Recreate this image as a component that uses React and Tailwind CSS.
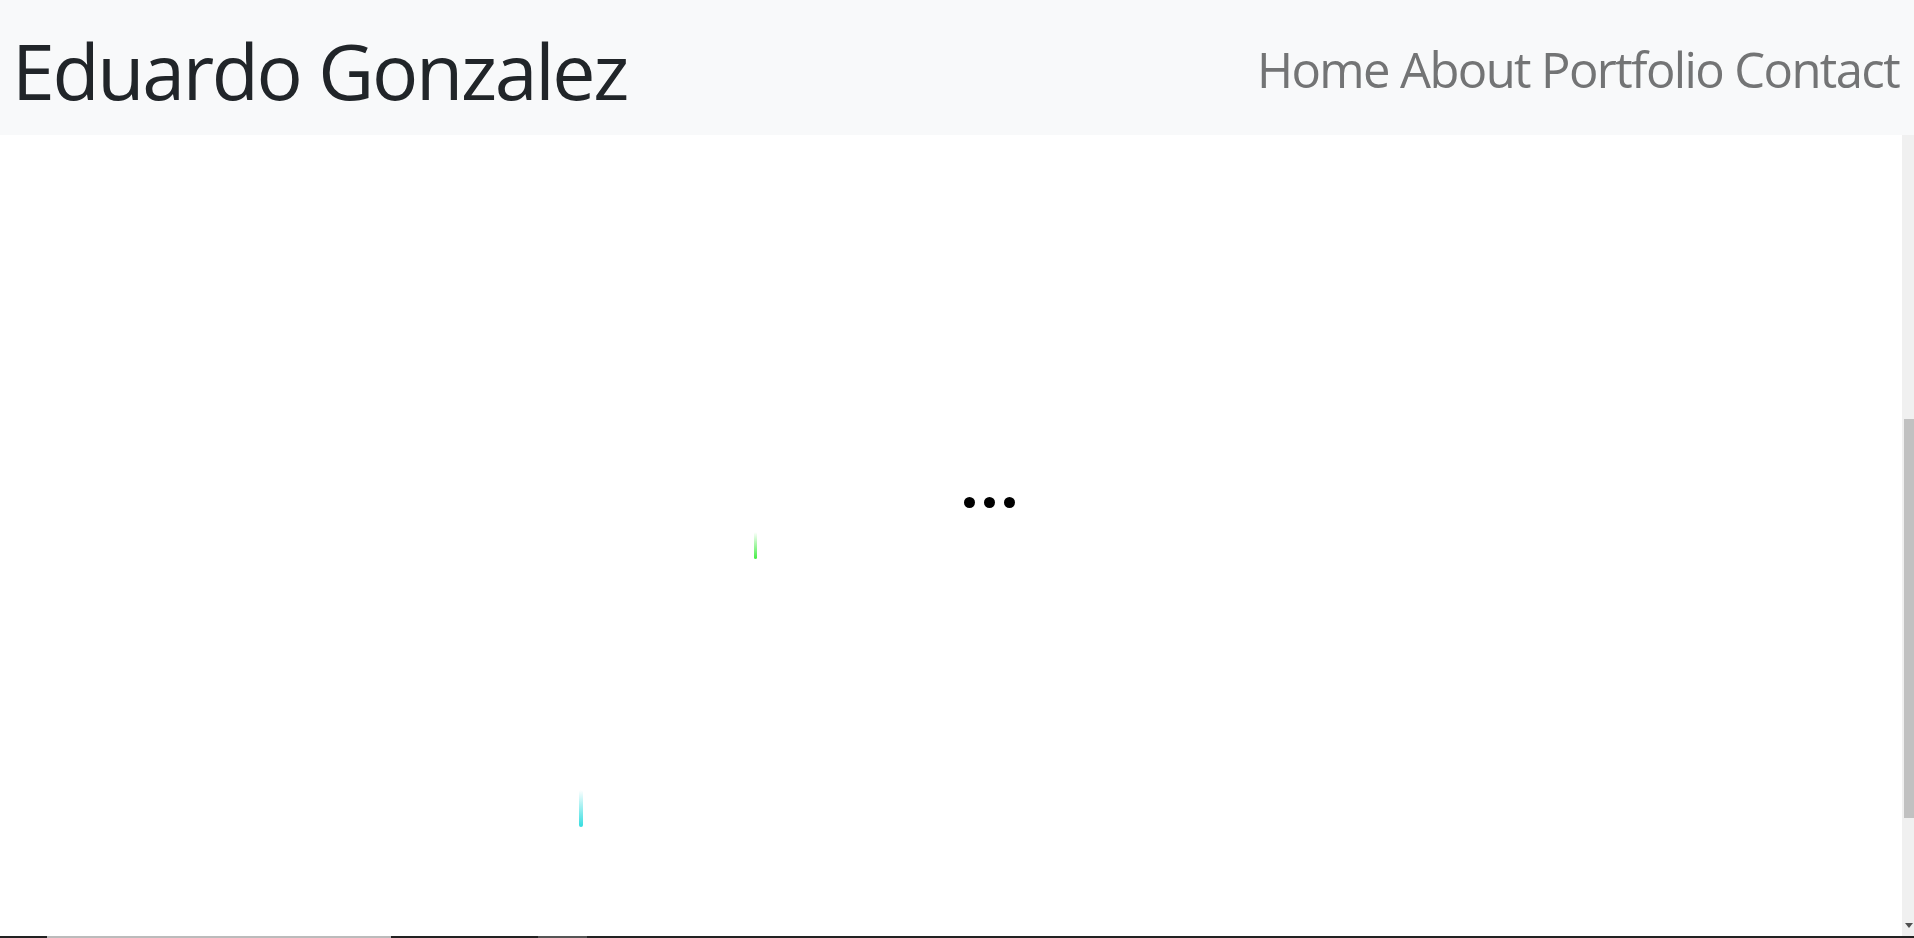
const links = ["Home", "About", "Portfolio", "Contact"];

const Header = () => (
  <header className="flex h-[135px] shrink-0 items-start justify-between bg-[#f8f9fa]">
    <h1 className="pl-[12px] pt-[21px] text-[77px] leading-[100px] tracking-[-0.03em] text-[#212529]">
      Eduardo Gonzalez
    </h1>
    <nav className="pr-[15px] pt-[37px] text-[49px] leading-[64px] tracking-[-0.033em] text-[#737475]">
      {links.map((l, i) => (
        <span key={l}>
          <a href={`#${l.toLowerCase()}`}>{l}</a>
          {i < links.length - 1 ? " " : ""}
        </span>
      ))}
    </nav>
  </header>
);

const Loader = () => (
  <div className="flex items-center gap-[9px]">
    <span className="h-[11px] w-[11px] rounded-full bg-black" />
    <span className="h-[11px] w-[11px] rounded-full bg-black" />
    <span className="h-[11px] w-[11px] rounded-full bg-black" />
  </div>
);

const Scrollbar = () => (
  <div className="flex w-[12px] shrink-0 flex-col bg-[#f0f0f0]">
    <div className="h-[284px]" />
    <div className="ml-[2px] h-[399px] w-[10px] bg-[#c1c1c1]" />
    <div className="flex flex-1 items-end justify-end pb-[8px] pr-[1px]">
      <svg width="8" height="5" viewBox="0 0 8 5">
        <path d="M0 0h8L4 5z" fill="#505050" />
      </svg>
    </div>
  </div>
);

const Strip = () => (
  <div className="flex h-[2px] shrink-0">
    <div className="w-[47px] bg-[#222]" />
    <div className="w-[344px] bg-[#bbb]" />
    <div className="w-[147px] bg-[#222]" />
    <div className="w-[49px] bg-[#555]" />
    <div className="flex-1 bg-[#222]" />
  </div>
);

export default function App() {
  return (
    <div
      className="flex h-screen flex-col overflow-hidden bg-white"
      style={{ fontFamily: '"Open Sans", "Noto Sans", sans-serif' }}
    >
      <Header />
      <div className="flex flex-1">
        <main className="relative flex-1">
          <div className="flex justify-center pl-[77px] pt-[362px]">
            <Loader />
          </div>
          <span className="absolute left-[754px] top-[397px] h-[27px] w-[3px] rounded-full bg-gradient-to-b from-transparent to-[#44ee44]" />
          <span className="absolute left-[579px] top-[655px] h-[37px] w-[4px] rounded-full bg-gradient-to-b from-transparent to-[#33dde0]" />
        </main>
        <Scrollbar />
      </div>
      <Strip />
    </div>
  );
}
